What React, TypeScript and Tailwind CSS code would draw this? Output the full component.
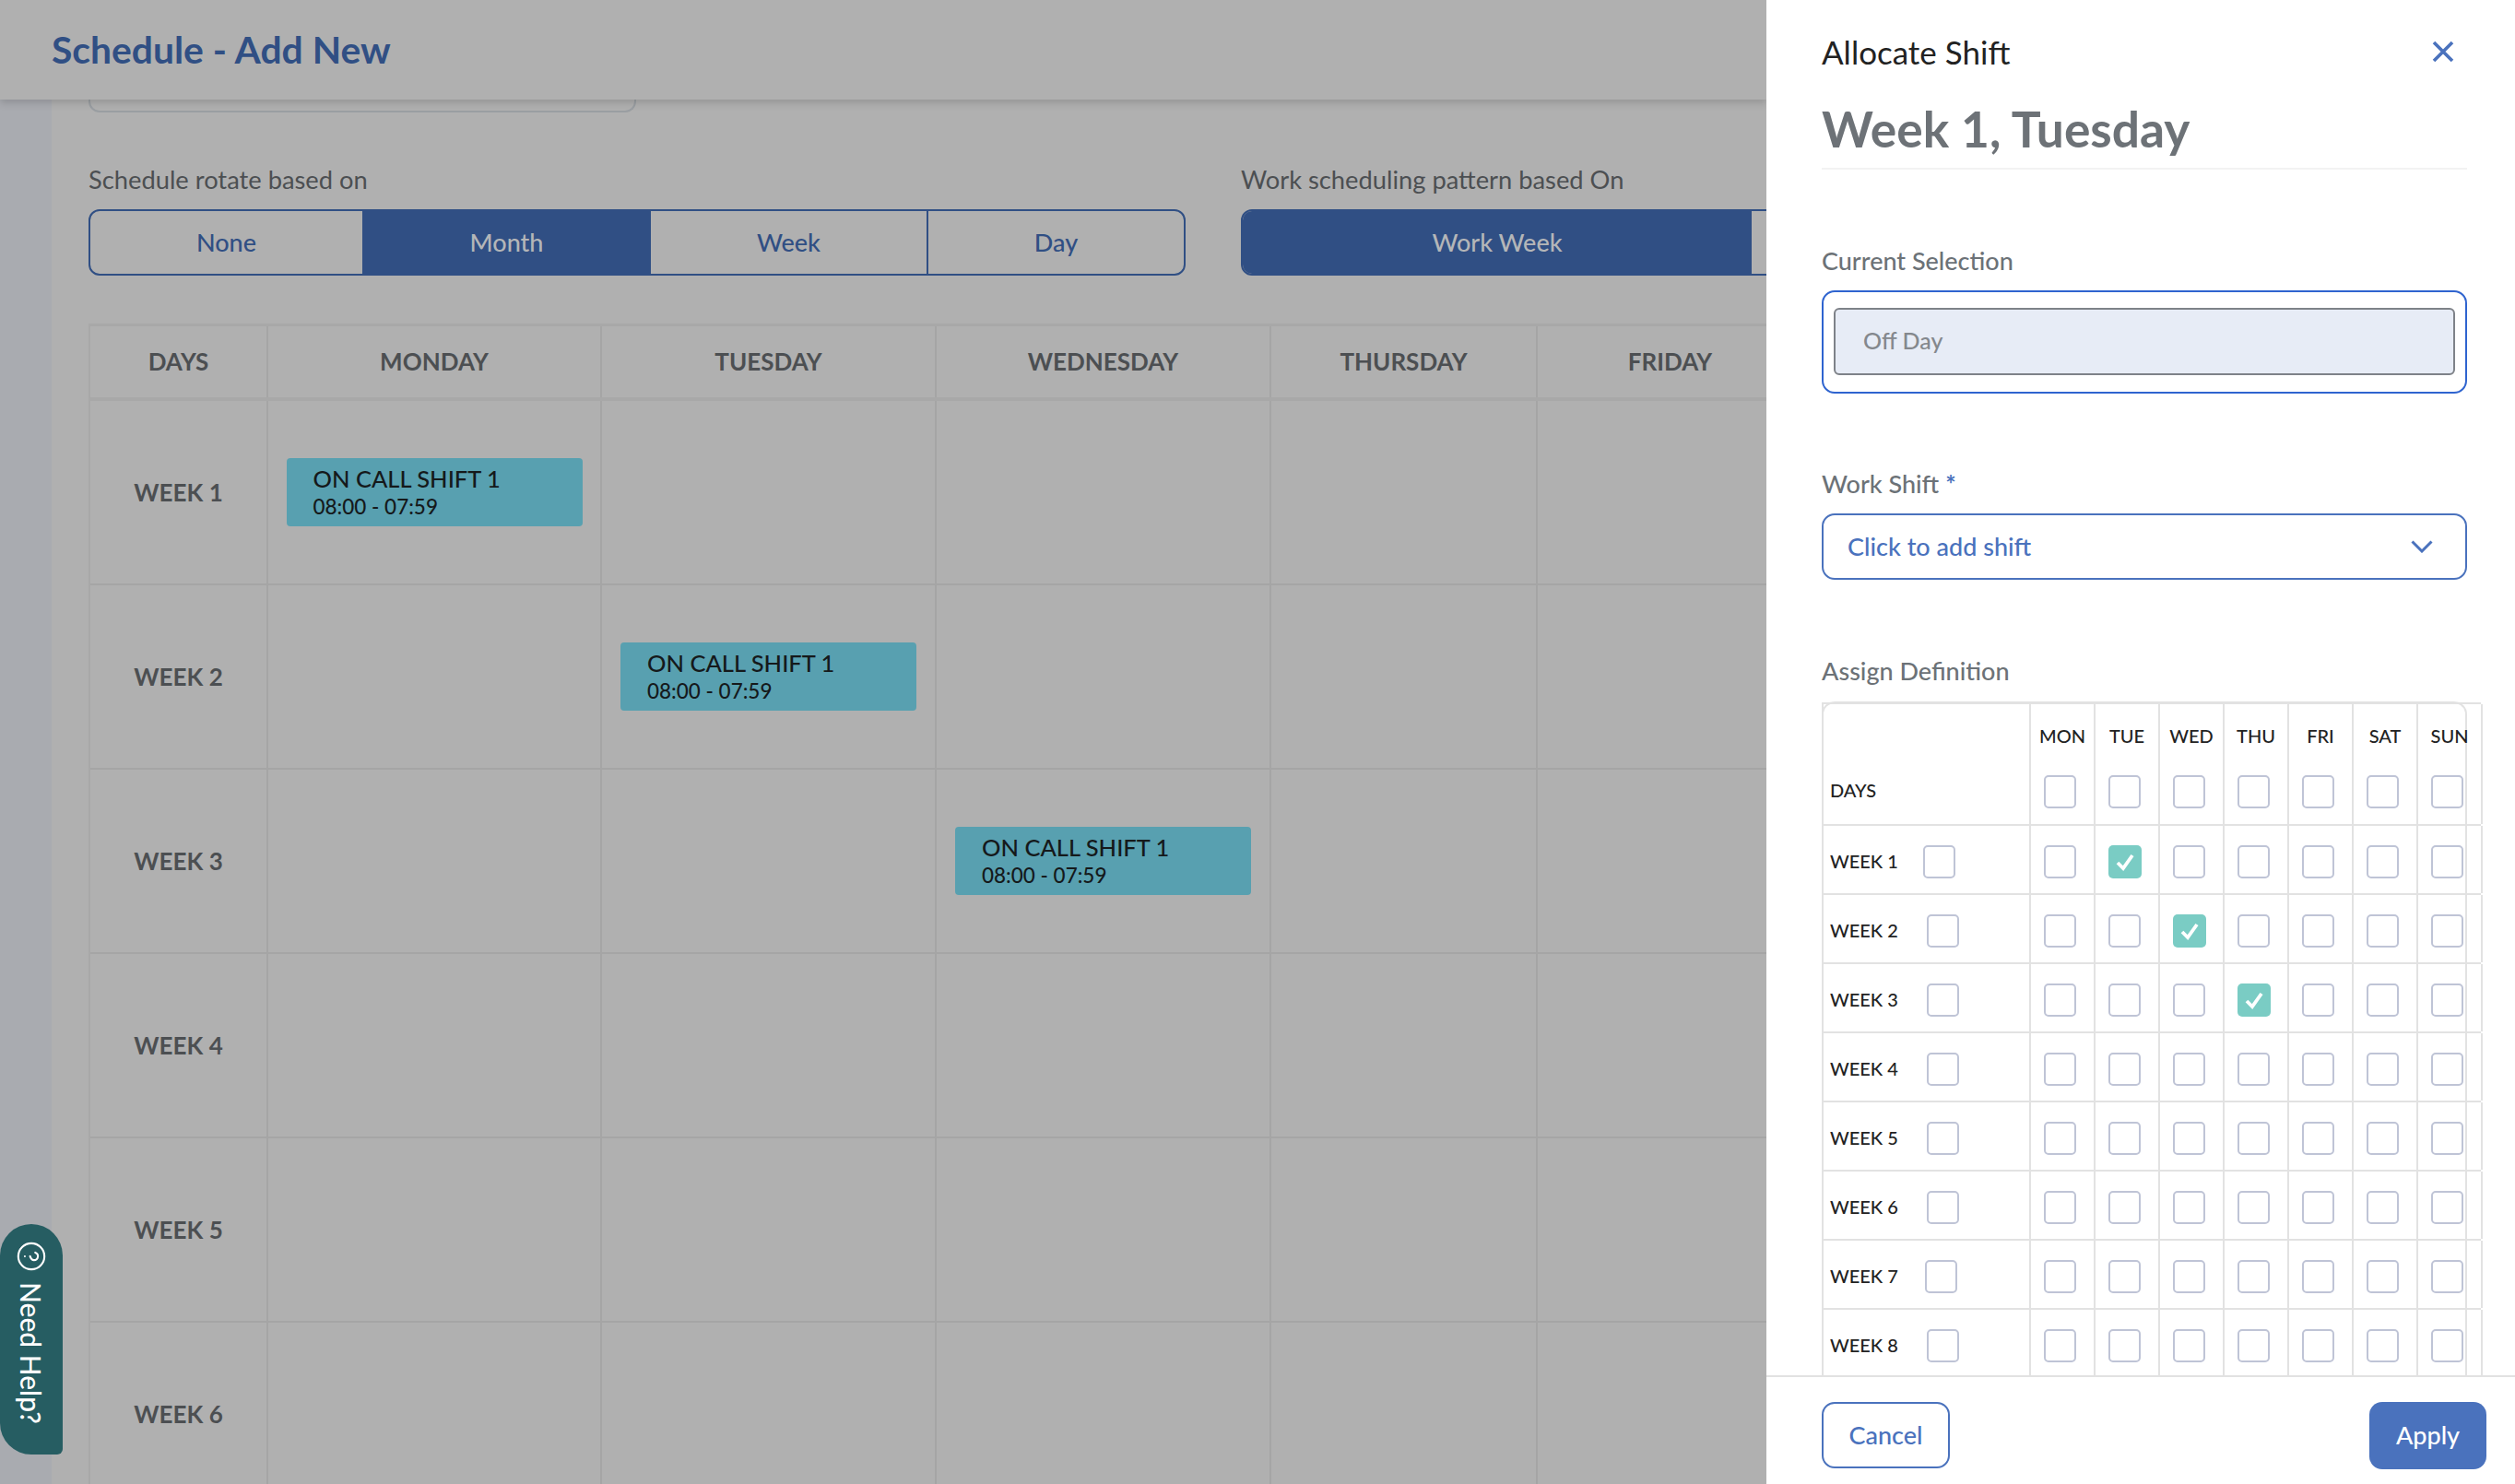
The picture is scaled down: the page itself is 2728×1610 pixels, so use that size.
import { CircleHelp } from "lucide-react";

const days = ["MONDAY", "TUESDAY", "WEDNESDAY", "THURSDAY", "FRIDAY"];
const weeks = ["WEEK 1", "WEEK 2", "WEEK 3", "WEEK 4", "WEEK 5", "WEEK 6"];
const shortDays = ["MON", "TUE", "WED", "THU", "FRI", "SAT", "SUN"];
const defWeeks = ["WEEK 1", "WEEK 2", "WEEK 3", "WEEK 4", "WEEK 5", "WEEK 6", "WEEK 7", "WEEK 8"];

// which week row has a shift on which weekday (0 = Monday)
const scheduled: Record<number, number> = { 0: 0, 1: 1, 2: 2 };
const allocated: Record<number, number> = { 0: 1, 1: 2, 2: 3 };

function Segment({ label, active, className }: { label: string; active?: boolean; className: string }) {
  return (
    <div
      className={`flex h-full items-center justify-center text-[27px] font-medium ${className} ${
        active ? "bg-[#304f84] text-[#b4b6b8]" : "text-[#304f84]"
      }`}
    >
      {label}
    </div>
  );
}

function ShiftCard() {
  return (
    <div className="flex h-[74px] w-[321px] flex-col justify-center rounded-[4px] bg-[#58a0b0] pb-[1px] pl-[29px] text-[#15191b]">
      <div className="text-[25.5px] leading-[32px] font-medium">ON CALL SHIFT 1</div>
      <div className="text-[22.5px] leading-[30px] font-medium">08:00 - 07:59</div>
    </div>
  );
}

function Checkbox({ checked, className = "" }: { checked?: boolean; className?: string }) {
  if (checked) {
    return (
      <div className={`flex h-[36px] w-[36px] shrink-0 items-center justify-center rounded-[5px] bg-[#7accc4] ${className}`}>
        <svg width="22" height="22" viewBox="0 0 22 22" fill="none">
          <path d="M3 12l6 6L19 4" stroke="#fff" strokeWidth="3.8" />
        </svg>
      </div>
    );
  }
  return <div className={`h-[36px] w-[35px] shrink-0 rounded-[5px] border-2 border-[#bfc4d6] bg-white ${className}`} />;
}

function ScheduleGrid() {
  const cols = "grid grid-cols-[193px_362px_363px_363px_289px_289px]";
  return (
    <div className="mt-[52px] w-[1881px] border-t-[3px] border-l-2 border-[#a8a8a8]">
      <div className={`${cols} h-[81px] border-b-4 border-[#a8a8a8]`}>
        <div className="flex items-center justify-center border-r-2 border-[#a5a5a5] text-[26px] font-bold text-[#4c4f52]">DAYS</div>
        {days.map((d) => (
          <div key={d} className="flex items-center justify-center border-r-2 border-[#a5a5a5] text-[26px] font-bold text-[#4c4f52]">
            {d}
          </div>
        ))}
      </div>
      {weeks.map((w, i) => (
        <div key={w} className={`${cols} h-[200px] border-b-2 border-[#a5a5a5]`}>
          <div className="flex items-center justify-center border-r-2 border-[#a5a5a5] text-[26px] font-bold text-[#4c4f52]">{w}</div>
          {days.map((d, j) => (
            <div key={d} className="flex items-center justify-center border-r-2 border-[#a5a5a5]">
              {scheduled[i] === j && <ShiftCard />}
            </div>
          ))}
        </div>
      ))}
    </div>
  );
}

function DefinitionTable() {
  const cols = "grid grid-cols-[225px_70px_70px_70px_70px_70px_70px_70px]";
  return (
    <div className="mt-[15px] h-[760px] w-[700px] rounded-t-[14px] border-2 border-b-0 border-[#e2e2e2]">
      <div className="-mt-[1px] -ml-[2px] w-[715px] border-t-2 border-l-2 border-[#e2e2e2]">
        <div className={`${cols} h-[132px] border-b-2 border-[#e2e2e2]`}>
          <div className="flex items-end border-r-2 border-[#e2e2e2] pb-[22px] pl-[7px] text-[20px] font-medium text-[#222]">DAYS</div>
          {shortDays.map((d) => (
            <div key={d} className="border-r-2 border-[#e2e2e2]">
              <div className="mt-[22px] h-[24px] text-center text-[20px] leading-[24px] font-medium text-[#222]">{d}</div>
              <Checkbox className="mt-[31px] ml-[14px]" />
            </div>
          ))}
        </div>
        {defWeeks.map((w, i) => (
          <div key={w} className={`${cols} h-[75px] border-b-2 border-[#e2e2e2]`}>
            <div className="flex items-center border-r-2 border-[#e2e2e2] pt-[5px] pl-[7px]">
              <span className="pb-[2px] text-[20px] font-medium text-[#222]">{w}</span>
              <Checkbox className={i === 0 ? "ml-[27px]" : i === 6 ? "ml-[29px]" : "ml-[31px]"} />
            </div>
            {shortDays.map((d, j) => (
              <div key={d} className="flex items-center border-r-2 border-[#e2e2e2] pt-[5px] pl-[14px]">
                <Checkbox checked={allocated[i] === j} />
              </div>
            ))}
          </div>
        ))}
      </div>
    </div>
  );
}

export default function App() {
  return (
    <div className="relative flex h-[1610px] w-[2728px] overflow-hidden bg-[#b0b0b0] [font-family:Lato,sans-serif]">
      {/* Page behind the drawer */}
      <div className="flex w-[1916px] shrink-0 flex-col overflow-hidden">
        <header className="relative z-10 flex h-[108px] shrink-0 items-center bg-[#b0b0b0] pl-[56px] shadow-[0_4px_8px_rgba(0,0,0,0.15)]">
          <h1 className="text-[40.8px] font-bold text-[#304f84]">Schedule - Add New</h1>
        </header>
        <div className="flex flex-1">
          <div className="w-[56px] shrink-0 bg-[#a9abb0]" />
          <main className="min-w-0 flex-1 pl-[40px]">
            <div className="h-[14px] w-[594px] rounded-b-[12px] border-2 border-t-0 border-[#9a9ea2]" />
            <div className="mt-[55px] flex gap-[60px]">
              <div>
                <div className="flex h-[36px] items-center text-[27.3px] text-[#4c4f52]">Schedule rotate based on</div>
                <div className="mt-[14px] flex h-[72px] w-[1190px] overflow-hidden rounded-[12px] border-2 border-[#304f84]">
                  <Segment label="None" className="w-[295px]" />
                  <Segment label="Month" active className="w-[313px]" />
                  <Segment label="Week" className="w-[301px] border-r-2 border-[#304f84]" />
                  <Segment label="Day" className="flex-1" />
                </div>
              </div>
              <div>
                <div className="flex h-[36px] items-center text-[27.3px] text-[#4c4f52]">Work scheduling pattern based On</div>
                <div className="mt-[14px] flex h-[72px] w-[800px] overflow-hidden rounded-[12px] border-2 border-[#304f84]">
                  <Segment label="Work Week" active className="w-[552px]" />
                  <Segment label="" className="flex-1" />
                </div>
              </div>
            </div>
            <ScheduleGrid />
          </main>
        </div>
      </div>

      {/* Allocate shift drawer */}
      <aside className="flex w-[812px] shrink-0 flex-col bg-white">
        <div className="flex-1 overflow-hidden pl-[60px]">
          <div className="w-[700px]">
            <div className="mt-[36px] flex h-[40px] items-center justify-between pr-[14px]">
              <h2 className="text-[35px] text-[#222]">Allocate Shift</h2>
              <svg width="24" height="24" viewBox="0 0 24 24" fill="none">
                <path d="M2 2l20 20M22 2 2 22" stroke="#4a72bd" strokeWidth="3.6" />
              </svg>
            </div>
            <div className="mt-[34px] flex h-[60px] items-center text-[53.3px] font-bold text-[#6d7277]">Week 1, Tuesday</div>
            <div className="mt-[12px] h-[2px] bg-[#f2f2f2]" />
            <div className="mt-[81px] flex h-[36px] items-center text-[27px] font-medium text-[#6c7277]">Current Selection</div>
            <div className="mt-[14px] flex h-[112px] items-center rounded-[14px] border-2 border-[#2f64cf] px-[11px]">
              <div className="-mt-[1px] flex h-[73px] w-full items-center rounded-[6px] border-2 border-[#7e8288] bg-[#e7ecf6] pb-[1px] pl-[30px] text-[25px] font-medium text-[#84888d]">
                Off Day
              </div>
            </div>
            <div className="mt-[80px] flex h-[36px] items-center text-[27px] font-medium text-[#6c7277]">
              Work Shift <span className="ml-[7px] font-bold text-[#4a72bd]">*</span>
            </div>
            <div className="mt-[14px] flex h-[72px] items-center justify-between rounded-[14px] border-2 border-[#4a72bd] pr-[35px] pl-[26px]">
              <span className="text-[27px] font-medium text-[#4a72bd]">Click to add shift</span>
              <svg width="24" height="14" viewBox="0 0 24 14" fill="none">
                <path d="M1.5 1.5 12 12 22.5 1.5" stroke="#4a72bd" strokeWidth="3" />
              </svg>
            </div>
            <div className="mt-[81px] flex h-[36px] items-center text-[27px] font-medium text-[#6c7277]">Assign Definition</div>
            <DefinitionTable />
          </div>
        </div>
        <footer className="flex h-[118px] shrink-0 items-start justify-between border-t-2 border-[#e2e2e2] pt-[27px] pr-[31px] pl-[60px]">
          <button className="h-[72px] w-[139px] rounded-[14px] border-2 border-[#4a72bd] text-[27px] font-medium text-[#4a72bd]">Cancel</button>
          <button className="h-[73px] w-[127px] rounded-[14px] bg-[#4a72bd] text-[27px] font-medium text-white">Apply</button>
        </footer>
      </aside>

      {/* Help tab over the sidebar */}
      <div className="absolute top-[1328px] left-0 flex h-[250px] w-[68px] flex-col items-center rounded-t-[34px] rounded-br-[6px] rounded-bl-[34px] bg-[#265d62] pt-[18px] text-white">
        <CircleHelp size={34} strokeWidth={1.5} className="rotate-90" />
        <span className="mt-[11px] text-[30px] leading-[34px] font-medium [writing-mode:vertical-rl]">Need Help?</span>
      </div>
    </div>
  );
}
